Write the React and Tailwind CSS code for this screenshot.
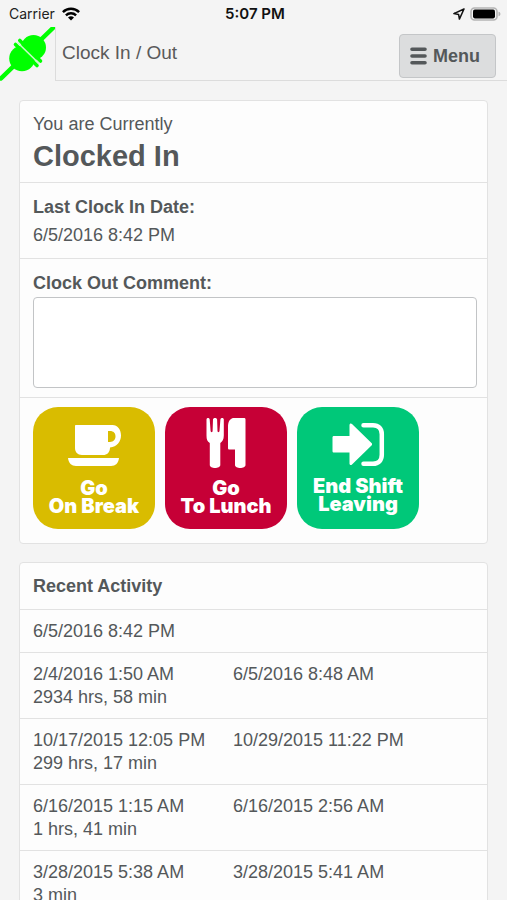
const activity = [
    { start: '6/5/2016 8:42 PM', end: '', total: '' },
    { start: '2/4/2016 1:50 AM', end: '6/5/2016 8:48 AM', total: '2934 hrs, 58 min' },
    { start: '10/17/2015 12:05 PM', end: '10/29/2015 11:22 PM', total: '299 hrs, 17 min' },
    { start: '6/16/2015 1:15 AM', end: '6/16/2015 2:56 AM', total: '1 hrs, 41 min' },
    { start: '3/28/2015 5:38 AM', end: '3/28/2015 5:41 AM', total: '3 min' },
];

function StatusBar() {
    return (
        <div className="grid grid-cols-3 items-center h-[27px] pl-[9px] pr-[6px] text-black font-['Inter','Liberation_Sans',sans-serif]">
            <div className="flex items-center gap-[7px] text-sm text-[#222]">
                <span>Carrier</span>
                <svg viewBox="0 0 18 14" className="w-[18px] h-[14px]" fill="none" stroke="#000" strokeWidth="2.4">
                    <path d="M.9 5.1a11.4 11.4 0 0 1 16.2 0" />
                    <path d="M3.9 8.3a7.2 7.2 0 0 1 10.2 0" />
                    <path d="M9 13.6 6 10.6a4.3 4.3 0 0 1 6 0Z" fill="#000" stroke="none" />
                </svg>
            </div>
            <span className="text-center text-[15px] leading-5 font-semibold text-[#111]">5:07 PM</span>
            <div className="flex items-center justify-end gap-[5px]">
                <svg viewBox="0 0 12 12" className="w-3 h-3" fill="none" stroke="#111" strokeWidth="1.5" strokeLinejoin="round">
                    <path d="M11 1 .9 5.6l4.7.8.8 4.7Z" />
                </svg>
                <svg viewBox="0 0 31 14" className="w-[31px] h-[14px]">
                    <rect x="1" y="1" width="26" height="12" rx="3.5" fill="#f4f4f4" stroke="#b4b4b4" strokeWidth="1.6" />
                    <rect x="3" y="2.6" width="22" height="8.8" rx="1.8" fill="#000" />
                    <path d="M28.5 4.8c1.6.4 1.9 1.2 1.9 2.2s-.3 1.8-1.9 2.2Z" fill="#b4b4b4" />
                </svg>
            </div>
        </div>
    );
}

function Header() {
    return (
        <header className="flex h-[54px]">
            <a href="#home" aria-label="Home" className="w-14 shrink-0 border-r border-[#dcdcdc]">
                <svg viewBox="0 0 55 54" className="w-[55px] h-[54px]" stroke="#00ff00" strokeLinecap="round">
                    <path d="M53 1 1 51.500" strokeWidth="4.5" />
                    <circle cx="33.5" cy="20.500" r="12.500" fill="#00ff00" stroke="none" />
                    <circle cx="22" cy="31.500" r="12.800" fill="#00ff00" stroke="none" />
                    <path d="m19.800 13.500 20.700 20.500" strokeWidth="3.600" />
                    <path d="m15.500 17.500 21.500 21" strokeWidth="3.600" />
                    <path d="m17.500 15.500 21.500 21" stroke="#c8f9c8" strokeWidth="1.600" strokeLinecap="butt" />
                </svg>
            </a>
            <div className="flex flex-1 items-start justify-between border-b border-[#dcdcdc] pl-[6px] pr-[11px] pt-[7px]">
                <h1 className="pt-[5px] text-[19px] leading-[28px] text-[#5a5a5a]">Clock In / Out</h1>
                <button type="button" className="flex h-11 items-center gap-[6px] rounded-sm border border-[#c4c6c8] bg-[#dcddde] pl-[10px] pr-[15px] text-lg font-bold text-[#54585a]">
                    <svg viewBox="0 0 17 18" className="w-[17px] h-[18px]" stroke="#54585a" strokeWidth="3.6" strokeLinecap="round">
                        <path d="M2 2.200h13M2 9h13M2 15.800h13" />
                    </svg>
                    Menu
                </button>
            </div>
        </header>
    );
}

function CupIcon() {
    return (
        <svg viewBox="0 0 122 60" className="w-full h-[60px]" fill="#fff">
            <path d="M43 18h36.500c5 0 8.500 4.500 8.500 10.500S84 40 77 40.500c0 5-3 7.500-7 7.500H49c-4.500 0-7-3-7-7V19c0-.6.4-1 1-1Zm32 6v11h2c3.500 0 5.500-2.500 5.500-5.700S80.500 24 77 24Z" />
            <path d="M35 51h51c-.5 5-3.500 8-8 8H43c-4.500 0-7.500-3-8-8Z" />
        </svg>
    );
}

function LunchIcon() {
    return (
        <svg viewBox="0 0 122 62" className="w-full h-[62px]" fill="#fff">
            <path d="M41.500 12.500c0-2 3-2 3.200 0l.9 11.500c.2 1.500 2 1.500 2 0l.4-11.500c.1-2 4-2 4.100 0l.4 11.500c0 1.500 1.800 1.500 2 0l.9-11.500c.2-2 3.400-2 3.400 0v16c0 4-1.500 6-3.500 7.500v22c0 4-10.500 4-10.500 0V36c-2.500-1.500-3.300-3.500-3.300-7.500Z" />
            <path d="M68 11h11c1 0 1.500.5 1.500 1.500V58c0 4-10.500 4-10.500 0V42.500h-5.500c-1 0-1.500-.5-1.500-1.500V20c0-5 1.500-8 5-9Z" />
        </svg>
    );
}

function LeaveIcon() {
    return (
        <svg viewBox="0 0 122 60" className="w-full h-[60px]">
            <path d="M37 29h15.500V18c0-1.500 1.500-2 2.500-1l19.500 19c.8.8.8 1.700 0 2.500L55 57.500c-1 1-2.500.5-2.500-1V45.500H37c-1 0-1.500-.5-1.500-1.500V30.500c0-1 .5-1.500 1.500-1.500Z" fill="#fff" />
            <path d="M66.500 18.200H76c5.500 0 8.800 3.500 8.800 9v20.600c0 5.500-3.300 9-8.800 9h-9.500" fill="none" stroke="#fff" strokeWidth="4.500" strokeLinecap="round" />
        </svg>
    );
}

const tile = "flex flex-col w-[122px] h-[122px] rounded-[25px] text-center text-white font-black text-xl leading-[18px] font-['Inter','Liberation_Sans',sans-serif]";

export default function App() {
    return (
        <div className="flex flex-col h-screen overflow-hidden bg-[#f4f4f4] text-lg leading-[23px] text-[#54585a] font-['Liberation_Sans',Arial,sans-serif]">
            <StatusBar />
            <Header />
            <main className="flex flex-1 flex-col gap-[18px] min-h-0 overflow-y-auto px-[19px] pt-[19px] [scrollbar-width:none]">
                <section className="shrink-0 divide-y divide-[#e2e2e2] rounded-sm border border-[#e2e2e2] bg-[#fdfdfd]">
                    <div className="px-[13px] pt-3 pb-[6px]">
                        <p>You are Currently</p>
                        <h2 className="text-[29px] leading-[40px] font-bold">Clocked In</h2>
                    </div>
                    <div className="px-[13px] pt-[10px] pb-[9px]">
                        <h3 className="leading-7 font-bold">Last Clock In Date:</h3>
                        <p className="leading-7">6/5/2016 8:42 PM</p>
                    </div>
                    <div className="pl-[13px] pr-[10px] pt-[10px] pb-[9px]">
                        <label htmlFor="comment" className="block leading-7 font-bold">Clock Out Comment:</label>
                        <textarea id="comment" className="block w-full h-[91px] resize-none rounded-sm border border-[#c2c4c6] bg-white p-2" />
                    </div>
                    <div className="flex flex-wrap gap-[10px] pl-[13px] pt-[9px] pb-[14px]">
                        <button type="button" className={`${tile} bg-[#d9bc00]`}>
                            <CupIcon />
                            <span className="pt-3">Go<br />On Break</span>
                        </button>
                        <button type="button" className={`${tile} bg-[#c60036]`}>
                            <LunchIcon />
                            <span className="pt-[10px]">Go<br />To Lunch</span>
                        </button>
                        <button type="button" className={`${tile} bg-[#00c879]`}>
                            <LeaveIcon />
                            <span className="pt-[10px]">End Shift<br />Leaving</span>
                        </button>
                    </div>
                </section>
                <section className="shrink-0 rounded-sm border border-[#e2e2e2] bg-[#fdfdfd]">
                    <h3 className="px-[13px] pt-3 pb-[11px] font-bold">Recent Activity</h3>
                    <table className="w-full text-left">
                        <tbody>
                            {activity.map((row) => (
                                <tr key={row.start} className="border-t border-[#e2e2e2] align-top">
                                    <td className="w-[213px] pt-[10px] pb-[9px] pl-[13px]">
                                        {row.start}
                                        {row.total && <div>{row.total}</div>}
                                    </td>
                                    <td className="pt-[10px] pb-[9px]">{row.end}</td>
                                </tr>
                            ))}
                        </tbody>
                    </table>
                </section>
            </main>
        </div>
    );
}
